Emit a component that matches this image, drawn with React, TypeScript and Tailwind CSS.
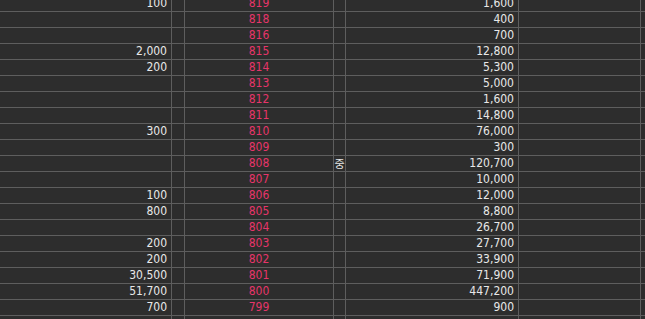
const rows: { left: string; price: string; right: string }[] = [
  { left: "100", price: "819", right: "1,600" },
  { left: "", price: "818", right: "400" },
  { left: "", price: "816", right: "700" },
  { left: "2,000", price: "815", right: "12,800" },
  { left: "200", price: "814", right: "5,300" },
  { left: "", price: "813", right: "5,000" },
  { left: "", price: "812", right: "1,600" },
  { left: "", price: "811", right: "14,800" },
  { left: "300", price: "810", right: "76,000" },
  { left: "", price: "809", right: "300" },
  { left: "", price: "808", right: "120,700" },
  { left: "", price: "807", right: "10,000" },
  { left: "100", price: "806", right: "12,000" },
  { left: "800", price: "805", right: "8,800" },
  { left: "", price: "804", right: "26,700" },
  { left: "200", price: "803", right: "27,700" },
  { left: "200", price: "802", right: "33,900" },
  { left: "30,500", price: "801", right: "71,900" },
  { left: "51,700", price: "800", right: "447,200" },
  { left: "700", price: "799", right: "900" },
  { left: "", price: "", right: "" },
];

export default function App() {
  return (
    <div className="h-[319px] w-[645px] overflow-hidden bg-[#2d2d2d] text-[12px] text-[#e8e8e8] font-['Tahoma','DejaVu_Sans_Condensed','Liberation_Sans',sans-serif]">
      <div className="-mt-[4px]">
        {rows.map((r, i) => (
          <div key={i} className="flex h-4 border-b border-[#5e5e5e] leading-[15px]">
            <div className="w-[172px] shrink-0 border-r border-[#5e5e5e] pr-[4px] text-right">{r.left}</div>
            <div className="w-[13px] shrink-0 border-r border-[#5e5e5e]" />
            <div className="w-[148px] shrink-0 text-center text-[#e6356a]">{r.price}</div>
            <div className="w-[13px] shrink-0 border-x border-[#5e5e5e] text-center text-[11px] font-['Noto_Sans_CJK_KR',sans-serif]">
              {r.price === "808" ? "중" : ""}
            </div>
            <div className="w-[173px] shrink-0 border-r border-[#5e5e5e] pr-[4px] text-right">{r.right}</div>
            <div className="w-[122px] shrink-0 border-r border-[#5e5e5e]" />
            <div className="flex-1" />
          </div>
        ))}
      </div>
    </div>
  );
}
